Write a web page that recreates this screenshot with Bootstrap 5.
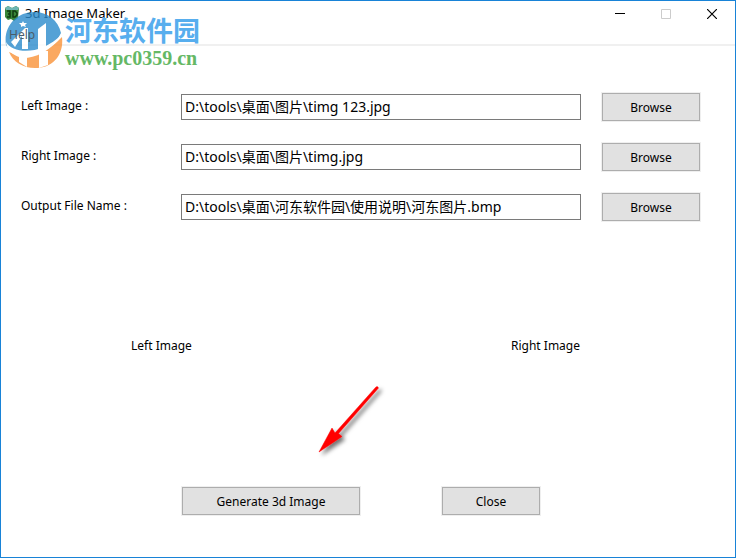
<!DOCTYPE html>
<html lang="en">
<head>
<meta charset="utf-8">
<meta name="viewport" content="width=device-width, initial-scale=1">
<title>3d Image Maker</title>
<link href="https://cdn.jsdelivr.net/npm/bootstrap@5.3.0/dist/css/bootstrap.min.css" rel="stylesheet">
<style>
body{font-family:"Noto Sans","Noto Sans CJK SC",sans-serif;font-size:12px;line-height:18px;color:#000;background:#fff}
.app-window{border:1px solid #1883d7}
.title-bar{height:24px}
.app-title{font-size:13px;line-height:14px;margin-left:6px}
.win-btn{width:46px;height:24px;padding:0;border:0;background:none;color:#000}
.win-btn:disabled{color:#ccc}
.menu-bar{height:21px;border-bottom:2px solid #f0f0f0}
.menu-bar a{color:#4a5c6a;font-size:12px;z-index:2}
.form-area{padding:47px 34px 0 20px}
.field-row{display:grid;grid-template-columns:160px minmax(0,1fr) 100px;margin-bottom:20px;min-height:30px}
.field-row label{padding-top:4px}
.path-box{height:26px;margin:1px 20px 0 0;padding:0 3px 2px;border:1px solid #7a7a7a;font-family:inherit;font-size:14px;color:#000;background:#fff;min-width:0}
.dlg-btn{height:28px;width:98px;padding:2px 0 0;border:1px solid #adadad;outline:1px solid #efefef;border-radius:0;background:#e1e1e1;color:#000;font-size:12px}
.dlg-btn:hover{background:#e5f1fb;border-color:#0078d7}
.field-row .dlg-btn{margin-left:1px}
.preview-row{padding:94px 0 0 130px}
.preview-left{width:380px}
.action-row{padding:132px 0 0 181px;gap:82px}
.action-row .dlg-generate{width:178px}
.site-mark{left:4px;top:10px;pointer-events:none}
.site-words{padding:5px 0 0 2px}
.site-name{font:700 27px/27px "Noto Sans CJK SC",sans-serif;color:#57aeee}
.site-url{font:700 20px/20px "Liberation Serif",serif;color:#65b865;padding-top:5px}
.pointer-arrow{left:310px;top:380px;pointer-events:none}
</style>
<script src="https://cdn.jsdelivr.net/npm/bootstrap@5.3.0/dist/js/bootstrap.bundle.min.js"></script>
</head>
<body>
<main class="app-window position-relative min-vh-100">
  <header class="title-bar d-flex align-items-center justify-content-between">
    <div class="d-flex align-items-center ps-1">
      <svg width="14" height="15" viewBox="0 0 14 15" aria-hidden="true"><path d="M0 2l3-2 4 2 4-2 3 2-1 10-4 3-3-2-3 1-3-3z" fill="#3a8638"/><path d="M0 2l3-2 4 2 4-2 3 2-1 2H1z" fill="#6cb5b4"/><path d="M2 5h3v6H2M3 8h2M8 5h2l2 2v2l-2 2H8z" fill="none" stroke="#123c10" stroke-width="1.5"/></svg>
      <span class="app-title">3d Image Maker</span>
    </div>
    <div class="d-flex">
      <button class="win-btn" type="button" aria-label="Minimize"><svg width="10" height="10" viewBox="0 0 10 10"><path d="M0 4.5h10" stroke="currentColor"/></svg></button>
      <button class="win-btn" type="button" aria-label="Maximize" disabled><svg width="10" height="10" viewBox="0 0 10 10"><path d="M.5.5h9v9h-9z" fill="none" stroke="currentColor"/></svg></button>
      <button class="win-btn" type="button" aria-label="Close window"><svg width="10" height="10" viewBox="0 0 10 10"><path d="M0 0l10 10M10 0L0 10" stroke="currentColor" stroke-width="1.2"/></svg></button>
    </div>
  </header>
  <nav class="menu-bar d-flex align-items-center"><a href="#" class="text-decoration-none position-relative ms-2">Help</a></nav>

  <form class="form-area">
    <div class="field-row">
      <label for="left">Left Image :</label>
      <input id="left" class="path-box" type="text" value="D:\tools\桌面\图片\timg 123.jpg">
      <button class="dlg-btn" type="button">Browse</button>
    </div>
    <div class="field-row">
      <label for="right">Right Image :</label>
      <input id="right" class="path-box" type="text" value="D:\tools\桌面\图片\timg.jpg">
      <button class="dlg-btn" type="button">Browse</button>
    </div>
    <div class="field-row">
      <label for="output">Output File Name :</label>
      <input id="output" class="path-box" type="text" value="D:\tools\桌面\河东软件园\使用说明\河东图片.bmp">
      <button class="dlg-btn" type="button">Browse</button>
    </div>
  </form>
  <div class="preview-row d-flex"><div class="preview-left">Left Image</div><div>Right Image</div></div>
  <div class="action-row d-flex">
    <button class="dlg-btn dlg-generate" type="button">Generate 3d Image</button>
    <button class="dlg-btn" type="button">Close</button>
  </div>

  <div class="site-mark position-absolute d-flex">
    <svg width="58" height="58" viewBox="0 0 58 58" aria-hidden="true">
      <g opacity=".8">
      <path d="M1 34C-2 15 12 1 29 1c14 0 24 8 27 21-5 12-19 21-33 22-10 1-18-3-22-10z" fill="#2b8ccd"/>
      <path d="M4 41c16 7 37 3 53-15 2 18-9 31-27 31-12 0-22-6-26-16z" fill="#f99339"/>
      <path d="M6 31L20 17h3v21h-6V25l-7 11zM14 45h8v11l-8-5zM33 18l8-6v26h-8zM34 40h9v14l-9 3z" fill="#fff"/>
      <path d="M1 31c7 12 35 14 56-8-11 18-28 24-38 24C9 46 2 40 1 31z" fill="#fff"/>
      <path d="M18 10l1 2 3 0-2 2 1 2-3-1-2 1 0-2-2-2 3 0z" fill="#fff"/>
      </g>
    </svg>
    <div class="site-words"><div class="site-name">河东软件园</div><div class="site-url">www.pc0359.cn</div></div>
  </div>
  <svg class="pointer-arrow position-absolute" width="80" height="80" viewBox="0 0 80 80" aria-hidden="true">
    <defs><filter id="soft" x="-20%" y="-20%" width="150%" height="150%"><feDropShadow dx="3" dy="3" stdDeviation="2" flood-color="#000" flood-opacity=".55"/></filter></defs>
    <path d="M64.500 6.500q2-2 3 .5L27.500 52.500l3.500 3L8 71l13-24 3 5z" fill="#f00" stroke="#f00" stroke-width=".5" filter="url(#soft)"/>
  </svg>
</main>
</body>
</html>
